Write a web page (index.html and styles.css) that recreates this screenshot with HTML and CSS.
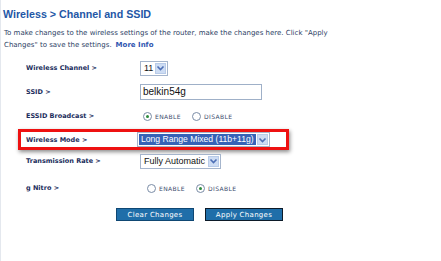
FILE: index.html
```html
<!DOCTYPE html>
<html lang="en">
  <head>
    <meta charset="UTF-8" />
    <title>Wireless &gt; Channel and SSID</title>
    <link rel="stylesheet" href="styles.css">
  </head>
  <body>
    <div class="page">
      <h1 class="title">Wireless &gt; Channel and SSID</h1>
      <p class="intro">
        To make changes to the wireless settings of the router, make the changes here. Click "Apply
        Changes" to save the settings.<a href="#" class="more">More Info</a>
      </p>

      <form class="settings">
        <div class="row">
          <label class="label">Wireless Channel &gt;</label>
          <div class="select select--channel">
            <span class="select__value">11</span>
            <span class="select__arrow"><svg width="9" height="6" viewBox="0 0 9 6"><path d="M1.5 1.5 L4.5 4.5 L7.5 1.5" fill="none" stroke="#4d6fb5" stroke-width="1.6"/></svg></span>
          </div>
        </div>

        <div class="row">
          <label class="label">SSID &gt;</label>
          <div class="textbox">belkin54g</div>
        </div>

        <div class="row">
          <label class="label">ESSID Broadcast &gt;</label>
          <div class="radios">
            <span class="radio radio--checked"></span><span class="radio__text">ENABLE</span>
            <span class="radio"></span><span class="radio__text">DISABLE</span>
          </div>
        </div>

        <div class="row row--marked">
          <label class="label">Wireless Mode &gt;</label>
          <div class="select select--mode">
            <span class="select__value select__value--active">Long Range Mixed (11b+11g)</span>
            <span class="select__arrow"><svg width="9" height="6" viewBox="0 0 9 6"><path d="M1.5 1.5 L4.5 4.5 L7.5 1.5" fill="none" stroke="#4d6fb5" stroke-width="1.6"/></svg></span>
          </div>
        </div>

        <div class="row row--short">
          <label class="label">Transmission Rate &gt;</label>
          <div class="select select--rate">
            <span class="select__value">Fully Automatic</span>
            <span class="select__arrow"><svg width="9" height="6" viewBox="0 0 9 6"><path d="M1.5 1.5 L4.5 4.5 L7.5 1.5" fill="none" stroke="#4d6fb5" stroke-width="1.6"/></svg></span>
          </div>
        </div>

        <div class="row row--tall">
          <label class="label">g Nitro &gt;</label>
          <div class="radios radios--nitro">
            <span class="radio"></span><span class="radio__text">ENABLE</span>
            <span class="radio radio--checked"></span><span class="radio__text">DISABLE</span>
          </div>
        </div>

        <div class="buttons">
          <button type="button" class="btn">Clear Changes</button>
          <button type="button" class="btn btn--apply">Apply Changes</button>
        </div>
      </form>
    </div>
  </body>
</html>
```

FILE: styles.css
```css
* {
  margin: 0;
  padding: 0;
  box-sizing: border-box;
}

body {
  width: 441px;
  height: 261px;
  background: #ffffff;
  font-family: "DejaVu Sans", Verdana, sans-serif;
  overflow: hidden;
}

.page {
  height: 100%;
  border-left: 1px solid #e4e8ee;
  padding: 7px 0 0 2px;
}

.title {
  font-family: "Liberation Sans", Arial, sans-serif;
  font-size: 10.7px;
  font-weight: bold;
  color: #2457a6;
  line-height: 14px;
}

.intro {
  margin-top: 6px;
  padding-left: 1px;
  width: 360px;
  font-size: 7px;
  line-height: 12px;
  color: #2e3f66;
}

.intro .more {
  display: inline-block;
  margin-left: 4px;
  color: #2f55b0;
  font-weight: bold;
  text-decoration: none;
}

.settings {
  margin-top: 5px;
}

.row {
  display: flex;
  align-items: center;
  height: 24px;
  margin-left: 23px;
}

.label {
  width: 114px;
  font-size: 6.5px;
  font-weight: bold;
  color: #1b2d5c;
}

/* fake select boxes */
.select {
  display: flex;
  align-items: center;
  height: 15px;
  border: 1px solid #a5b5cc;
  background: #ffffff;
  padding: 1px;
  font-family: "Liberation Sans", Arial, sans-serif;
  font-size: 9px;
  color: #111111;
}

.select__value {
  padding: 0 2px;
  line-height: 11px;
  white-space: nowrap;
}

.select__value--active {
  background: #3662b7;
  color: #ffffff;
}

.select__arrow {
  display: flex;
  align-items: center;
  justify-content: center;
  width: 11px;
  height: 11px;
  margin-left: 1px;
  background: #cddcf3;
  border: 1px solid #b8cbe8;
}

.select--channel .select__value {
  padding-right: 1px;
}

.select--mode {
  font-size: 8.6px;
}

.textbox {
  width: 122px;
  height: 16px;
  border: 1px solid #9fb0c8;
  padding: 0 2px;
  font-family: "Liberation Sans", Arial, sans-serif;
  font-size: 10px;
  line-height: 14px;
  color: #111111;
}

.radios {
  display: flex;
  align-items: center;
  padding-left: 3px;
}

.radios--nitro {
  padding-left: 7px;
}

.radio {
  width: 9px;
  height: 9px;
  border: 1px solid #7a8ca6;
  border-radius: 50%;
  background: #ffffff;
  position: relative;
}

.radio--checked::after {
  content: "";
  position: absolute;
  left: 2px;
  top: 2px;
  width: 3px;
  height: 3px;
  border-radius: 50%;
  background: #2c8a3c;
}

.radio__text {
  margin: 0 11px 0 3px;
  font-size: 6px;
  letter-spacing: 0.4px;
  color: #3b4b6e;
}

/* the red annotation frame round Wireless Mode */
.row--marked {
  height: 21px;
  margin-left: 15px;
  margin-top: 1px;
  margin-bottom: 2px;
  width: 271px;
  padding-left: 5px;
  border: 3px solid #ee1111;
  box-shadow: 1px 2px 4px rgba(0, 0, 0, 0.45);
}

.row--marked .label {
  width: 111px;
}

.row--short {
  height: 18px;
}

.row--tall {
  height: 36px;
}

.buttons {
  display: flex;
  gap: 11px;
  margin: 2px 0 0 113px;
}

.btn {
  width: 78px;
  height: 13px;
  background: #1f6ea9;
  border: 1px solid #0f4773;
  color: #ffffff;
  font-family: "DejaVu Sans", Verdana, sans-serif;
  font-size: 7px;
  letter-spacing: 0.3px;
  cursor: pointer;
}

.btn--apply {
  border-color: #0c1a28;
}
```
